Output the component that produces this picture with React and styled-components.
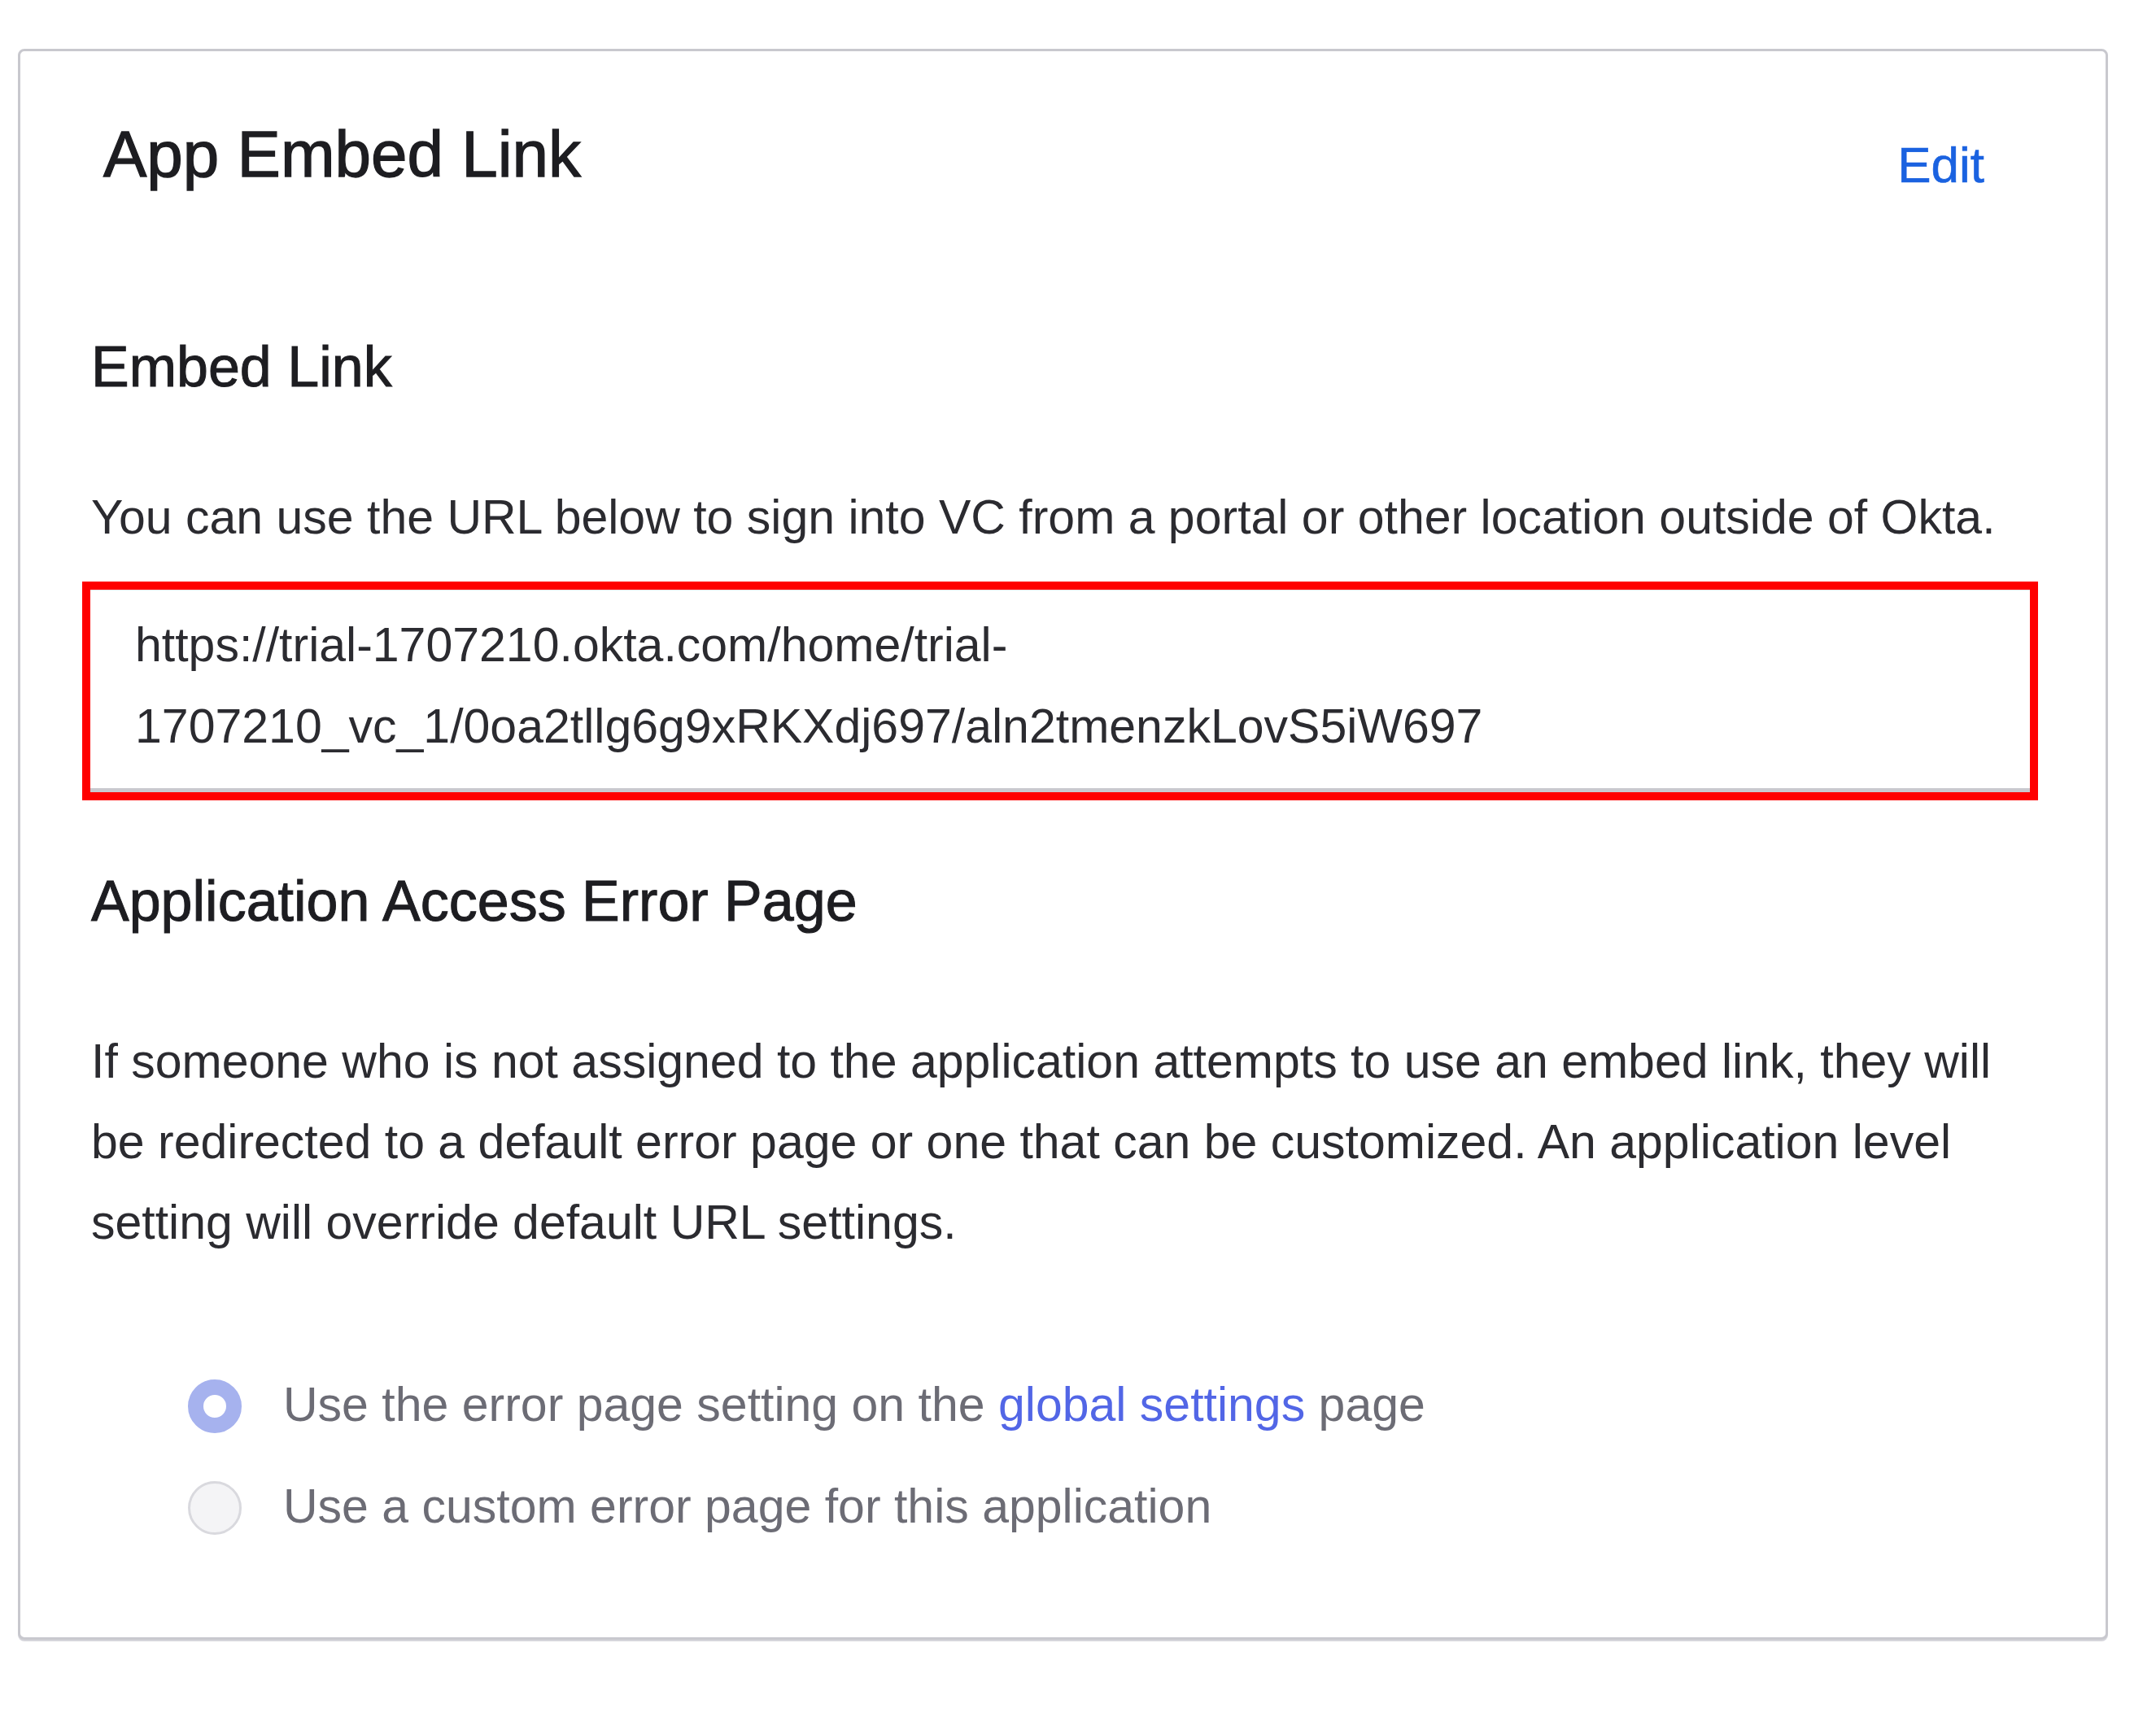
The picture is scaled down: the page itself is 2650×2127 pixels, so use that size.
import React from 'react';
import styled, { createGlobalStyle } from 'styled-components';

const GlobalStyle = createGlobalStyle`
  html, body {
    margin: 0;
    padding: 0;
    background: #ffffff;
  }
  body {
    font-family: 'Liberation Sans', Arial, sans-serif;
    color: #2b2b30;
  }
`;

const Page = styled.div`
  padding: 60px 0 112px 22px;
`;

const Card = styled.section`
  box-sizing: border-box;
  width: 2569px;
  padding: 87px 86px 98px 87px;
  border: 3px solid #c8c8ce;
  border-radius: 8px;
  box-shadow: 0 2px 0 #d6d6db;
  background: #fff;
`;

const Header = styled.div`
  display: flex;
  justify-content: space-between;
  align-items: flex-start;
  height: 80px;
`;

const Title = styled.h1`
  margin: 0 0 0 15px;
  font-size: 80px;
  line-height: 80px;
  font-weight: 400;
  color: #1d1d21;
  -webkit-text-stroke: 1.3px #1d1d21;
`;

const EditLink = styled.a`
  margin: 22px 63px 0 0;
  font-size: 62px;
  line-height: 62px;
  color: #1a62e0;
  text-decoration: none;
  cursor: pointer;
  -webkit-text-stroke: 0.6px #1a62e0;
`;

const SectionTitle = styled.h2`
  margin: ${(p) => p.$top}px 0 0;
  font-size: 70px;
  line-height: 70px;
  font-weight: 400;
  color: #1d1d21;
  -webkit-text-stroke: 1px #1d1d21;
`;

const Text = styled.p`
  margin: ${(p) => p.$top}px 0 0;
  font-size: 59px;
  line-height: ${(p) => p.$lh || 59}px;
  color: #2b2b30;
`;

const Highlight = styled.div`
  margin: 49px -3px 0 -11px;
  border: 10px solid #ff0000;
`;

const UrlBox = styled.div`
  padding: 17px 60px 26px 55px;
  border-top: 1px solid #e4e4e8;
  border-bottom: 5px solid #c9c9cf;
  font-size: 59px;
  line-height: 100px;
  color: #2b2b30;
  word-break: break-all;
`;

const Options = styled.div`
  display: flex;
  flex-direction: column;
  margin: 112px 0 0 119px;
`;

const Option = styled.label`
  display: flex;
  align-items: center;
  gap: 51px;
  height: 125px;
  font-size: 59px;
  line-height: 125px;
  color: #6c6c75;
`;

const Radio = styled.span`
  box-sizing: border-box;
  flex: none;
  width: 66px;
  height: 66px;
  margin-top: 3px;
  border-radius: 50%;
  border: ${(p) => (p.$checked ? '19px solid #a6b2ee' : '3px solid #d9d9de')};
  background: ${(p) => (p.$checked ? '#ffffff' : '#f4f4f6')};
`;

const InlineLink = styled.a`
  color: #5266e6;
  text-decoration: none;
`;

export default function App() {
  return (
    <>
      <GlobalStyle />
      <Page>
        <Card>
          <Header>
            <Title>App Embed Link</Title>
            <EditLink>Edit</EditLink>
          </Header>

          <SectionTitle $top={186}>Embed Link</SectionTitle>
          <Text $top={121}>
            You can use the URL below to sign into VC from a portal or other location outside of Okta.
          </Text>
          <Highlight>
            <UrlBox>
              https://trial-1707210.okta.com/home/trial-
              <br />
              1707210_vc_1/0oa2tllg6g9xRKXdj697/aln2tmenzkLovS5iW697
            </UrlBox>
          </Highlight>

          <SectionTitle $top={89}>Application Access Error Page</SectionTitle>
          <Text $top={113} $lh={99}>
            If someone who is not assigned to the application attempts to use an embed link, they will
            be redirected to a default error page or one that can be customized. An application level
            setting will override default URL settings.
          </Text>

          <Options>
            <Option>
              <Radio $checked />
              <span>
                Use the error page setting on the <InlineLink>global settings</InlineLink> page
              </span>
            </Option>
            <Option>
              <Radio />
              <span>Use a custom error page for this application</span>
            </Option>
          </Options>
        </Card>
      </Page>
    </>
  );
}
